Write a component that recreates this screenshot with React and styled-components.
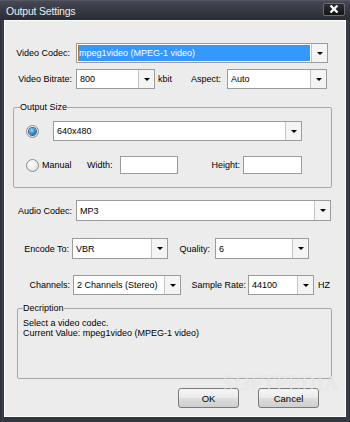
import React from 'react';
import styled, { createGlobalStyle } from 'styled-components';

const GlobalStyle = createGlobalStyle`
  html, body {
    margin: 0;
    padding: 0;
    background: #2f323b;
  }
  body {
    font-family: "Liberation Sans", Arial, sans-serif;
    font-size: 9px;
    color: #000;
  }
`;

const Combo = ({ value, w, h = 20, selected }) => (
  <ComboBox $w={w} $h={h}>
    <ComboValue>
      {selected ? <Selected>{value}</Selected> : <Plain>{value}</Plain>}
    </ComboValue>
    <DropButton>
      <Arrow />
    </DropButton>
  </ComboBox>
);

const Radio = ({ checked }) => (
  <RadioCircle>{checked && <RadioDot />}</RadioCircle>
);

const App = () => {
  return (
    <Window>
      <GlobalStyle />
      <TitleBar>
        <Title>Output Settings</Title>
        <CloseButton>
          <svg width="10" height="8" viewBox="0 0 10 8">
            <path d="M1.5 0.5 L8.5 7.5 M8.5 0.5 L1.5 7.5" stroke="#fff" strokeWidth="2.2" />
          </svg>
        </CloseButton>
      </TitleBar>
      <Body>
        <Row $mt={23}>
          <Label $w={72} $pr={6}>Video Codec:</Label>
          <Combo w={252} value="mpeg1video (MPEG-1 video)" selected />
        </Row>
        <Row $mt={6}>
          <Label $w={72}>Video Bitrate:</Label>
          <Combo w={79} value="800" />
          <Unit $w={20}>kbit</Unit>
          <Label $w={52} $pr={6}>Aspect:</Label>
          <Combo w={100} value="Auto" />
        </Row>

        <Group $mt={13} $ml={9} $w={319}>
          <Legend $ml={6}>Output Size</Legend>
          <GroupRow $mt={8} $h={20}>
            <RadioSlot $w={39}>
              <Radio checked />
            </RadioSlot>
            <Combo w={249} value="640x480" />
          </GroupRow>
          <GroupRow $mt={15} $h={18}>
            <RadioSlot $w={28}>
              <Radio />
            </RadioSlot>
            <Text $w={45}>Manual</Text>
            <Text $w={33}>Width:</Text>
            <TextInput $w={58} />
            <Label $w={65} $pr={3}>Height:</Label>
            <TextInput $w={59} />
          </GroupRow>
        </Group>

        <Row $mt={12} $h={21}>
          <Label $w={72} $pr={4}>Audio Codec:</Label>
          <Combo w={255} h={21} value="MP3" />
        </Row>
        <Row $mt={17} $h={21}>
          <Label $w={68} $pr={3}>Encode To:</Label>
          <Combo w={96} h={21} value="VBR" />
          <Label $w={47} $pr={5}>Quality:</Label>
          <Combo w={94} h={21} value="6" />
        </Row>
        <Row $mt={16}>
          <Label $w={69} $pr={3}>Channels:</Label>
          <Combo w={108} value="2 Channels (Stereo)" />
          <Label $w={67} $pr={2}>Sample Rate:</Label>
          <Combo w={66} value="44100" />
          <Unit $w={20} $pl={4}>HZ</Unit>
        </Row>

        <DescGroup>
          <Legend $ml={5}>Decription</Legend>
          <DescText>
            Select a video codec.
            <br />
            Current Value: mpeg1video (MPEG-1 video)
          </DescText>
        </DescGroup>

        <ButtonRow>
          <Button>OK</Button>
          <Button>Cancel</Button>
        </ButtonRow>
        <Watermark>SOFTPEDIA</Watermark>
      </Body>
    </Window>
  );
};

export default App;

const Window = styled.div`
  width: 350px;
  height: 422px;
  box-sizing: border-box;
  display: flex;
  flex-direction: column;
  padding: 0 4px 5px 4px;
  background: linear-gradient(to right, #2a2c35 0, #3c3f4b 2px, #33363f 4px, #33363f 346px, #3c3f4b 348px, #2a2c35 350px);
  overflow: hidden;
`;

const TitleBar = styled.div`
  height: 20px;
  margin: 0 -4px;
  padding: 0 5px 0 6px;
  display: flex;
  align-items: center;
  justify-content: space-between;
  background: linear-gradient(to bottom, #62656e 0, #474a54 1px, #3a3d46 8px, #2a2c33 20px);
`;

const Title = styled.span`
  color: #ececec;
  font-size: 10.5px;
  letter-spacing: -0.2px;
  padding-top: 2px;
`;

const CloseButton = styled.div`
  width: 20px;
  height: 11px;
  margin-top: -2px;
  display: flex;
  align-items: center;
  justify-content: center;
  background: linear-gradient(to bottom, #2c2e35, #121317);
  border: 1px solid #6a6c74;
  border-radius: 2px;
`;

const Body = styled.div`
  position: relative;
  flex: 1;
  display: flex;
  flex-direction: column;
  background: #ececec;
  box-shadow: inset 1px 1px 0 #fff, inset -1px -1px 0 #fff;
`;

const Row = styled.div`
  display: flex;
  align-items: center;
  height: ${(p) => p.$h || 20}px;
  margin-top: ${(p) => p.$mt}px;
`;

const Label = styled.span`
  width: ${(p) => p.$w}px;
  box-sizing: border-box;
  padding-right: ${(p) => (p.$pr === undefined ? 4 : p.$pr)}px;
  text-align: right;
  white-space: nowrap;
`;

const Unit = styled.span`
  width: ${(p) => p.$w}px;
  box-sizing: border-box;
  padding-left: ${(p) => (p.$pl === undefined ? 3 : p.$pl)}px;
`;

const Text = styled.span`
  width: ${(p) => p.$w}px;
  box-sizing: border-box;
  padding-left: ${(p) => p.$pl || 0}px;
`;

const ComboBox = styled.div`
  width: ${(p) => p.$w}px;
  height: ${(p) => p.$h}px;
  box-sizing: border-box;
  display: flex;
  background: #fff;
  border: 1px solid #9b9b9b;
`;

const ComboValue = styled.div`
  flex: 1;
  display: flex;
  align-items: center;
  padding: 1px;
  min-width: 0;
`;

const Plain = styled.span`
  padding-left: 2px;
  white-space: nowrap;
`;

const Selected = styled.span`
  flex: 1;
  align-self: stretch;
  display: flex;
  align-items: center;
  padding-left: 1px;
  color: #fff;
  background: #3399ff;
  outline: 1px dotted #b87a3c;
  outline-offset: -1px;
  white-space: nowrap;
`;

const DropButton = styled.div`
  width: 15px;
  display: flex;
  align-items: center;
  justify-content: center;
  background: #f4f4f4;
  border-left: 1px solid #c4c4c4;
`;

const Arrow = styled.div`
  width: 0;
  height: 0;
  border-left: 3px solid transparent;
  border-right: 3px solid transparent;
  border-top: 3px solid #000;
`;

const Group = styled.fieldset`
  width: ${(p) => p.$w}px;
  box-sizing: border-box;
  margin: ${(p) => p.$mt}px 0 0 ${(p) => p.$ml}px;
  padding: 0 0 13px 0;
  min-width: 0;
  border: 1px solid #a8a8a8;
  border-radius: 2px;
`;

const Legend = styled.legend`
  margin-left: ${(p) => p.$ml}px;
  padding: 0;
  line-height: 11px;
  font-size: 9px;
`;

const GroupRow = styled.div`
  display: flex;
  align-items: center;
  height: ${(p) => p.$h}px;
  margin-top: ${(p) => p.$mt}px;
`;

const RadioSlot = styled.div`
  width: ${(p) => p.$w}px;
  padding-left: 12px;
  box-sizing: border-box;
  display: flex;
  align-items: center;
`;

const RadioCircle = styled.div`
  width: 13px;
  height: 13px;
  box-sizing: border-box;
  border-radius: 50%;
  border: 1px solid #8e8e8e;
  background: radial-gradient(circle at 40% 35%, #ffffff 0, #f2f2f2 40%, #d4d4d4 100%);
  display: flex;
  align-items: center;
  justify-content: center;
`;

const RadioDot = styled.div`
  width: 7px;
  height: 7px;
  border-radius: 50%;
  background: radial-gradient(circle at 40% 35%, #8ee0ff 0, #2a8fd8 50%, #0b3f7e 100%);
  box-shadow: 0 0 0 1px #3a5f8a;
`;

const TextInput = styled.div`
  width: ${(p) => p.$w}px;
  height: 18px;
  box-sizing: border-box;
  background: #fff;
  border: 1px solid #9b9b9b;
`;

const DescGroup = styled.fieldset`
  width: 315px;
  height: 76px;
  box-sizing: border-box;
  margin: 8px 0 0 13px;
  padding: 0;
  min-width: 0;
  border: 1px solid #a8a8a8;
  border-radius: 2px;
`;

const DescText = styled.div`
  padding: 4px 0 0 5px;
  line-height: 10px;
`;

const ButtonRow = styled.div`
  display: flex;
  justify-content: flex-end;
  gap: 19px;
  margin-top: 9px;
  padding-right: 27px;
`;

const Button = styled.div`
  width: 61px;
  height: 20px;
  box-sizing: border-box;
  display: flex;
  align-items: center;
  justify-content: center;
  border: 1px solid #7a7a7a;
  border-radius: 3px;
  background: linear-gradient(to bottom, #f6f6f6 0, #ebebeb 50%, #dddddd 51%, #cfcfcf 100%);
  font-size: 9.5px;
`;

const Watermark = styled.div`
  position: absolute;
  left: 219px;
  top: 356px;
  pointer-events: none;
  font-family: "Liberation Serif", serif;
  font-size: 20px;
  line-height: 14px;
  letter-spacing: 1px;
  color: rgba(255, 255, 255, 0.55);
  text-shadow: 0 0 1px rgba(150, 150, 150, 0.35);
`;
